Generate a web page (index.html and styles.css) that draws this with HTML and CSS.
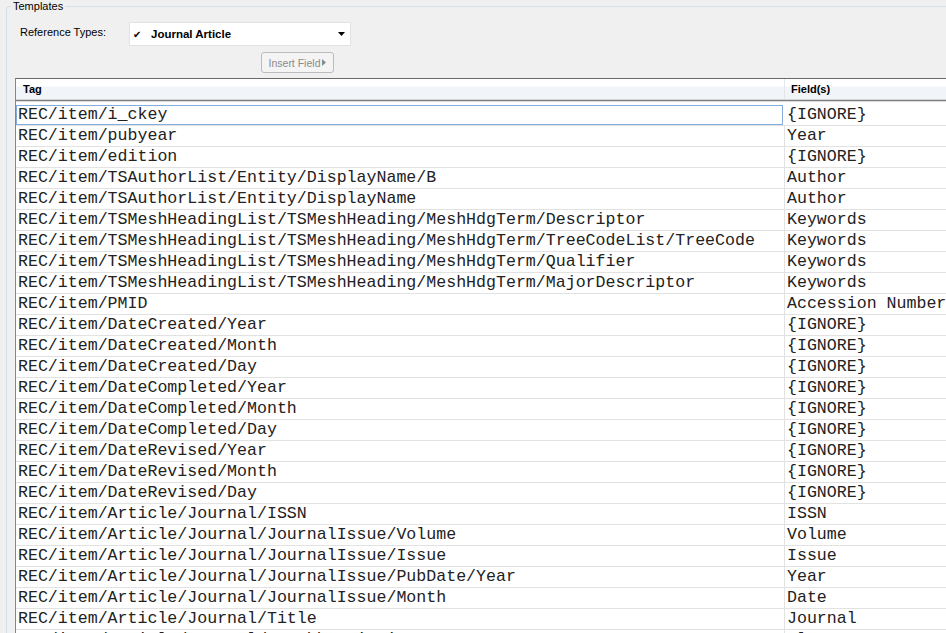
FILE: index.html
```html
<!DOCTYPE html>
<html>
<head>
<meta charset="utf-8">
<link rel="stylesheet" href="styles.css">
</head>
<body>
<fieldset class="group">
  <legend class="group-title">Templates</legend>
  <div class="type-row">
    <span class="type-label">Reference Types:</span>
    <div class="select">
      <span class="check">&#10004;</span>
      <span class="select-value">Journal Article</span>
      <svg class="select-arrow" width="7" height="4" viewBox="0 0 7 4"><path d="M0 0H7L3.5 4Z" fill="#000"/></svg>
    </div>
  </div>
  <div class="btn-row">
    <div class="btn">Insert Field<svg class="btn-arrow" width="4" height="7" viewBox="0 0 4 7"><path d="M0 0L4 3.5L0 7Z" fill="#8a8a8a"/></svg></div>
  </div>
  <div class="grid">
    <div class="grid-head">
      <div class="hcell c-tag">Tag</div>
      <div class="hcell c-field">Field(s)</div>
    </div>
    <div class="grid-body">
      <div class="row"><div class="cell c-tag focus">REC/item/i_ckey</div><div class="cell c-field">{IGNORE}</div></div>
      <div class="row"><div class="cell c-tag">REC/item/pubyear</div><div class="cell c-field">Year</div></div>
      <div class="row"><div class="cell c-tag">REC/item/edition</div><div class="cell c-field">{IGNORE}</div></div>
      <div class="row"><div class="cell c-tag">REC/item/TSAuthorList/Entity/DisplayName/B</div><div class="cell c-field">Author</div></div>
      <div class="row"><div class="cell c-tag">REC/item/TSAuthorList/Entity/DisplayName</div><div class="cell c-field">Author</div></div>
      <div class="row"><div class="cell c-tag">REC/item/TSMeshHeadingList/TSMeshHeading/MeshHdgTerm/Descriptor</div><div class="cell c-field">Keywords</div></div>
      <div class="row"><div class="cell c-tag">REC/item/TSMeshHeadingList/TSMeshHeading/MeshHdgTerm/TreeCodeList/TreeCode</div><div class="cell c-field">Keywords</div></div>
      <div class="row"><div class="cell c-tag">REC/item/TSMeshHeadingList/TSMeshHeading/MeshHdgTerm/Qualifier</div><div class="cell c-field">Keywords</div></div>
      <div class="row"><div class="cell c-tag">REC/item/TSMeshHeadingList/TSMeshHeading/MeshHdgTerm/MajorDescriptor</div><div class="cell c-field">Keywords</div></div>
      <div class="row"><div class="cell c-tag">REC/item/PMID</div><div class="cell c-field">Accession Number</div></div>
      <div class="row"><div class="cell c-tag">REC/item/DateCreated/Year</div><div class="cell c-field">{IGNORE}</div></div>
      <div class="row"><div class="cell c-tag">REC/item/DateCreated/Month</div><div class="cell c-field">{IGNORE}</div></div>
      <div class="row"><div class="cell c-tag">REC/item/DateCreated/Day</div><div class="cell c-field">{IGNORE}</div></div>
      <div class="row"><div class="cell c-tag">REC/item/DateCompleted/Year</div><div class="cell c-field">{IGNORE}</div></div>
      <div class="row"><div class="cell c-tag">REC/item/DateCompleted/Month</div><div class="cell c-field">{IGNORE}</div></div>
      <div class="row"><div class="cell c-tag">REC/item/DateCompleted/Day</div><div class="cell c-field">{IGNORE}</div></div>
      <div class="row"><div class="cell c-tag">REC/item/DateRevised/Year</div><div class="cell c-field">{IGNORE}</div></div>
      <div class="row"><div class="cell c-tag">REC/item/DateRevised/Month</div><div class="cell c-field">{IGNORE}</div></div>
      <div class="row"><div class="cell c-tag">REC/item/DateRevised/Day</div><div class="cell c-field">{IGNORE}</div></div>
      <div class="row"><div class="cell c-tag">REC/item/Article/Journal/ISSN</div><div class="cell c-field">ISSN</div></div>
      <div class="row"><div class="cell c-tag">REC/item/Article/Journal/JournalIssue/Volume</div><div class="cell c-field">Volume</div></div>
      <div class="row"><div class="cell c-tag">REC/item/Article/Journal/JournalIssue/Issue</div><div class="cell c-field">Issue</div></div>
      <div class="row"><div class="cell c-tag">REC/item/Article/Journal/JournalIssue/PubDate/Year</div><div class="cell c-field">Year</div></div>
      <div class="row"><div class="cell c-tag">REC/item/Article/Journal/JournalIssue/Month</div><div class="cell c-field">Date</div></div>
      <div class="row"><div class="cell c-tag">REC/item/Article/Journal/Title</div><div class="cell c-field">Journal</div></div>
      <div class="row"><div class="cell c-tag">REC/item/Article/Journal/ISOAbbreviation</div><div class="cell c-field">Alternate Journal</div></div>
    </div>
  </div>
</fieldset>
</body>
</html>
```
FILE: styles.css
```css
html, body {
  margin: 0;
  padding: 0;
  background: #f0f0f0;
  overflow: hidden;
  width: 946px;
  height: 633px;
}
body {
  font-family: "Liberation Sans", Arial, sans-serif;
  font-size: 11px;
  color: #000;
}
.group {
  margin: 0 -40px 0 6px;
  padding: 10px 0 0 4px;
  border: 1px solid #d5dfe5;
  border-radius: 3px;
  min-width: 0;
}
.group-title {
  padding: 0 2px;
  margin-left: 0;
  line-height: 12px;
  font-size: 11px;
  color: #000;
}
.type-row {
  display: flex;
  align-items: center;
  height: 24px;
}
.type-label {
  margin-left: 9px;
  width: 109px;
  font-size: 11px;
  position: relative;
  top: -2px;
}
.select {
  width: 220px;
  height: 22px;
  background: #fff;
  border: 1px solid #e2e2e2;
  display: flex;
  align-items: center;
}
.check {
  font-size: 10px;
  margin-left: 3px;
  width: 18px;
}
.select-value {
  font-weight: bold;
  font-size: 11.5px;
  flex: 1;
}
.select-arrow {
  margin-right: 5px;
}
.btn-row {
  display: flex;
  margin-top: 6px;
  padding-left: 250px;
}
.btn {
  width: 71px;
  height: 19px;
  border: 1px solid #b9bdc1;
  border-radius: 3px;
  background: #f4f4f4;
  color: #8a8a8a;
  font-size: 10.5px;
  display: flex;
  align-items: center;
  justify-content: center;
  gap: 2px;
}
.grid {
  margin: 5px 0 0 4px;
  border-top: 1px solid #696969;
  border-left: 1px solid #828790;
  background: #fff;
}
.grid-head {
  display: flex;
  height: 20px;
  background: linear-gradient(#ffffff 0, #ffffff 7px, #f1f4f8 8px, #f1f4f8 100%);
  border-bottom: 1px solid #d5d5d5;
  box-shadow: 0 1px 0 #808080, 0 2px 0 #d9d9d9;
  margin-bottom: 5px;
}
.hcell {
  font-weight: bold;
  font-size: 11px;
  display: flex;
  align-items: center;
  box-sizing: border-box;
}
.hcell.c-tag {
  width: 769px;
  padding-left: 7px;
  border-right: 1px solid #e3e6ea;
}
.hcell.c-field {
  padding-left: 6px;
  flex: 1;
}
.grid-body {
  font-family: "Liberation Mono", "Courier New", monospace;
  font-size: 16.6px;
  color: #222;
}
.row {
  display: flex;
  height: 20px;
  border-bottom: 1px solid #e2e2e2;
}
.cell {
  line-height: 20px;
  white-space: nowrap;
  overflow: hidden;
  box-sizing: border-box;
}
.cell.c-tag {
  width: 769px;
  padding-left: 2px;
  border-right: 1px solid #e2e2e2;
}
.cell.c-tag.focus {
  outline: 1px solid #84acdd;
  outline-offset: -1px;
  width: 767px;
  margin-right: 2px;
}
.cell.c-field {
  padding-left: 2px;
  flex: 1;
}
```
